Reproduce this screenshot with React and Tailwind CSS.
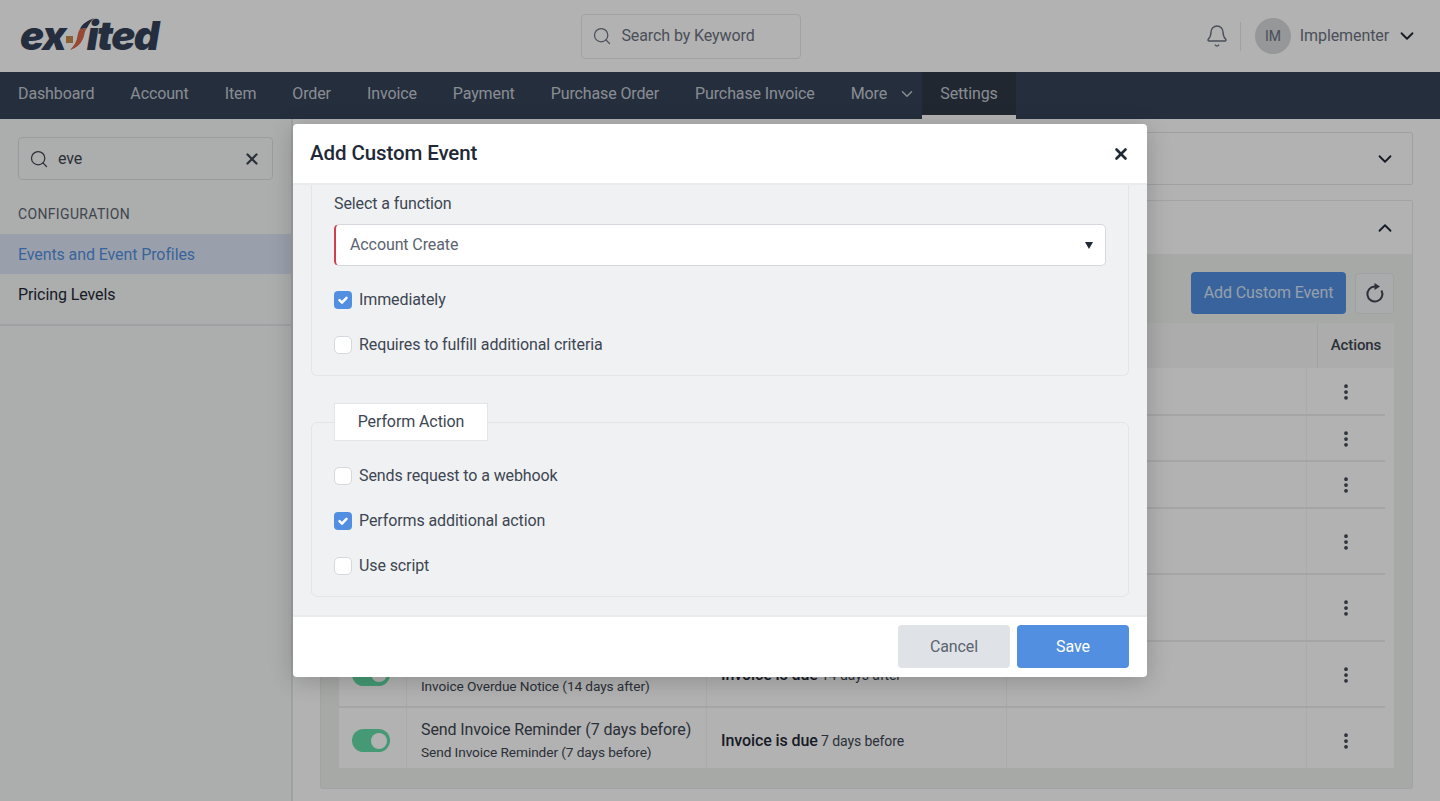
import { Bell, ChevronDown, ChevronUp, MoreVertical, Search, X } from "lucide-react";

const navItems = ["Dashboard", "Account", "Item", "Order", "Invoice", "Payment", "Purchase Order", "Purchase Invoice"];

const rows = [
  { h: "h-[47px]" },
  { h: "h-[46px]" },
  { h: "h-[47px]" },
  { h: "h-[66px]" },
  { h: "h-[67px]" },
  { h: "h-[66px]", on: true, title: "Invoice Overdue Notice (14 days after)", sub: "Invoice Overdue Notice (14 days after)", when: "14 days after" },
  { h: "h-[67px]", on: true, title: "Send Invoice Reminder (7 days before)", sub: "Send Invoice Reminder (7 days before)", when: "7 days before" },
];

function Logo() {
  return (
    <div className="flex items-center font-['Inter',sans-serif] text-[40px] font-black italic leading-none text-[#36435a]">
      <span className="tracking-[-1px]">ex</span>
      <svg width="30" height="34" viewBox="0 0 30 34" className="ml-[-3px] mr-[-6px] mt-[-1px] overflow-visible">
        <rect x="3" y="17" width="7" height="7" fill="#c98a4e" />
        <path d="M7 31 C14 29 19 24 21 17 C21.500 14 22 12 24 9 L17 10 C15.500 12 15 14 14.500 17 C14 22 11 27 7 31 Z" fill="#d8694a" />
        <path d="M17 10 C19 5 24 2 31 -1 C28 2 26 5 24 9 Z" fill="#36435a" />
      </svg>
      <span className="tracking-[-1.500px]">ited</span>
    </div>
  );
}

function Checkbox({ checked, label }) {
  return (
    <label className="flex items-center gap-[7px] text-base leading-none text-[#3d4652]">
      {checked ? (
        <span className="flex h-[18px] w-[18px] items-center justify-center rounded-[4px] bg-[#528fe0]">
          <svg width="12" height="12" viewBox="0 0 12 12" fill="none" stroke="white" strokeWidth="2.500" strokeLinecap="round" strokeLinejoin="round">
            <path d="M2.500 6.200 5 8.600 9.500 3.800" />
          </svg>
        </span>
      ) : (
        <span className="h-[18px] w-[18px] rounded-[5px] border border-[#d5d8dd] bg-white" />
      )}
      {label}
    </label>
  );
}

function Row({ row }) {
  return (
    <div className={`flex pr-[9px] ${row.h}`}>
      <div className="flex w-[68px] items-center justify-center border-r border-[#f3f4f5] pr-[4px]">
        {row.on && (
          <span className="flex h-[23px] w-[38px] items-center justify-end rounded-full bg-[#63dca6] pr-[3px]">
            <span className="h-[16px] w-[16px] rounded-full bg-white" />
          </span>
        )}
      </div>
      <div className="flex w-[300px] flex-col justify-center border-r border-[#f3f4f5] pl-[14px] pt-[1px] text-[#3d4652]">
        {row.title && <span className="text-base leading-[22px]">{row.title}</span>}
        {row.sub && <span className="text-[13.7px] leading-[22px]">{row.sub}</span>}
      </div>
      <div className="flex w-[300px] items-center border-r border-[#f3f4f5] pl-[14px] pt-[1px] text-[#3d4652]">
        {row.when && (
          <p className="text-sm">
            <span className="text-base font-medium text-[#1f2937]">Invoice is due</span> {row.when}
          </p>
        )}
      </div>
      <div className="w-[300px] border-r border-[#f3f4f5]" />
      <div className="flex flex-1 items-center justify-center pt-[1px]">
        <MoreVertical size={20} strokeWidth={2.500} className="text-[#3d4652]" />
      </div>
    </div>
  );
}

function Page() {
  return (
    <div className="flex h-[801px] flex-col overflow-hidden bg-white font-['Roboto',sans-serif] text-base tracking-[-0.1px]">
      <header className="flex h-[72px] shrink-0 items-center justify-between pl-[20px] pr-[22px]">
        <Logo />
        <div className="ml-[20px] flex h-[45px] w-[220px] items-center gap-[9px] rounded-[4px] border border-[#e5e7eb] pl-[10px] text-[#6b7280]">
          <Search size={20} strokeWidth={1.500} />
          <span>Search by Keyword</span>
        </div>
        <div className="flex items-center text-[#6b7280]">
          <Bell size={24} strokeWidth={1.400} />
          <span className="ml-[11px] h-[29px] border-l border-[#e2e5e9]" />
          <span className="ml-[14px] flex h-[36px] w-[36px] items-center justify-center rounded-full bg-[#d6d8da] text-sm">IM</span>
          <span className="ml-[9px]">Implementer</span>
          <ChevronDown size={22} strokeWidth={2} className="ml-[7px] text-[#1f2937]" />
        </div>
      </header>

      <nav className="flex h-[47px] shrink-0 items-stretch bg-[#364358] pl-[18px] tracking-[-0.12px] text-[#c5cad2]">
        <div className="flex items-center gap-[36px] pb-[3px]">
          {navItems.map((item) => (
            <span key={item}>{item}</span>
          ))}
          <span className="flex items-center gap-[11px]">
            More
            <ChevronDown size={18} strokeWidth={2} />
          </span>
        </div>
        <div className="ml-[6px] flex w-[94px] items-center justify-center border-b-[4px] border-white bg-[#2e3845]">
          Settings
        </div>
      </nav>

      <div className="flex min-h-0 flex-1">
        <aside className="w-[293px] shrink-0 border-r-2 border-[#e5e7eb] bg-[#f7f8f8]">
          <div className="px-[18px] pt-[18px]">
            <div className="flex h-[43px] w-[255px] items-center gap-[9px] rounded-[4px] border border-[#dcdfe3] pl-[10px] pr-[11px] text-[#3d4652]">
              <Search size={20} strokeWidth={1.500} />
              <span className="flex-1">eve</span>
              <X size={18} strokeWidth={3} />
            </div>
            <div className="mt-[24px] text-sm tracking-[0.35px] text-[#5b6470]">CONFIGURATION</div>
          </div>
          <div className="mt-[10px] border-b-2 border-[#e5e7eb] pb-[10px]">
            <div className="flex h-[40px] items-center bg-[#dde6f5] px-[18px] pt-[1px] text-[#528fe0]">Events and Event Profiles</div>
            <div className="flex h-[40px] items-center px-[18px] pt-[1px] text-[#1f2937]">Pricing Levels</div>
          </div>
        </aside>

        <main className="min-w-0 flex-1 pl-[27px] pr-[27px] pt-[13px]">
          <div className="flex h-[53px] items-center justify-end rounded-[2px] border border-[#e2e5e9] pr-[16px]">
            <ChevronDown size={22} strokeWidth={2} className="text-[#1f2937]" />
          </div>
          <div className="mt-[15px] rounded-[2px] border border-[#e8eaee]">
            <div className="flex h-[53px] items-center justify-end pr-[16px]">
              <ChevronUp size={22} strokeWidth={2} className="text-[#1f2937]" />
            </div>
            <div className="h-[534px] bg-[#f0f3f0] px-[18px] pt-[18px]">
              <div className="flex items-center justify-end gap-[9px]">
                <button className="h-[42px] w-[155px] rounded-[4px] bg-[#528fe0] text-[#d8e4f5]">Add Custom Event</button>
                <button className="flex h-[41px] w-[39px] items-center justify-center rounded-[4px] border border-[#e2e5e9] bg-[#f4f5f6] text-[#3d4652]">
                  <svg width="24" height="24" viewBox="0 0 24 24" fill="none" stroke="currentColor" strokeWidth="2">
                    <path d="M18.500 9.500 A7.500 7.500 0 1 1 12 5.500" />
                    <path d="M11.500 2 L17 5.500 L11.500 9 Z" fill="currentColor" stroke="none" />
                  </svg>
                </button>
              </div>
              <div className="mt-[9px] h-[445px] overflow-hidden bg-white">
                <div className="flex h-[45px] bg-[#f6f6f6]">
                  <div className="flex-1 border-r border-[#e8eaec]" />
                  <div className="flex w-[76px] items-center justify-center text-[15px] font-medium text-[#3d4652]">Actions</div>
                </div>
                {rows.map((row, i) => (
                  <div key={i} className="relative">
                    {i > 0 && <span className="absolute left-0 right-[9px] top-[-1px] h-[2px] bg-[#ecedee]" />}
                    <Row row={row} />
                  </div>
                ))}
              </div>
            </div>
          </div>
        </main>
      </div>
    </div>
  );
}

function Modal() {
  return (
    <div className="absolute left-[293px] top-[124px] flex h-[553px] w-[854px] flex-col overflow-hidden rounded-[4px] bg-white font-['Roboto',sans-serif] tracking-[-0.1px] shadow-[0_4px_24px_rgba(0,0,0,0.2)]">
      <div className="flex h-[61px] shrink-0 items-center justify-between border-b-2 border-[#e9ebee] pl-[17px] pr-[17px]">
        <h2 className="text-[20.5px] font-medium text-[#1f2937]">Add Custom Event</h2>
        <X size={18} strokeWidth={3.500} className="text-[#1f2937]" />
      </div>

      <div className="min-h-0 flex-1 overflow-hidden border-b-2 border-[#e9ebee] bg-[#f0f1f3] px-[18px]">
        <section className="h-[191px] rounded-b-[6px] border border-t-0 border-[#e2e5e9] px-[22px] pt-[8px]">
          <div className="leading-[21px] text-[#3d4652]">Select a function</div>
          <div className="mt-[10px] flex h-[42px] items-center justify-between rounded-[5px] border border-l-2 border-[#d5d8dd] border-l-[#cf3f4f] bg-white pl-[14px] pr-[12px] text-[#5b6470]">
            <span>Account Create</span>
            <span className="h-0 w-0 border-x-[4px] border-t-[7px] border-x-transparent border-t-[#1f2937]" />
          </div>
          <div className="mt-[25px] flex flex-col gap-[27px]">
            <Checkbox checked label="Immediately" />
            <Checkbox label="Requires to fulfill additional criteria" />
          </div>
        </section>

        <div className="relative mt-[46px] h-[175px] rounded-[6px] border border-[#e2e5e9] px-[22px] pt-[44px]">
          <div className="absolute left-[22px] top-[-20px] flex h-[38px] w-[154px] items-center justify-center border border-[#e2e5e9] bg-white text-[#3d4652]">
            Perform Action
          </div>
          <div className="flex flex-col gap-[27px]">
            <Checkbox label="Sends request to a webhook" />
            <Checkbox checked label="Performs additional action" />
            <Checkbox label="Use script" />
          </div>
        </div>
      </div>

      <div className="flex h-[60px] shrink-0 items-center justify-end gap-[7px] pb-[1px] pr-[18px]">
        <button className="h-[43px] w-[112px] rounded-[4px] bg-[#dfe2e6] pt-[1px] text-[#5b6470]">Cancel</button>
        <button className="h-[43px] w-[112px] rounded-[4px] bg-[#528fe0] pt-[1px] text-white">Save</button>
      </div>
    </div>
  );
}

export default function App() {
  return (
    <div className="relative h-[801px] overflow-hidden">
      <Page />
      <div className="absolute inset-0 bg-black/30" />
      <Modal />
    </div>
  );
}
